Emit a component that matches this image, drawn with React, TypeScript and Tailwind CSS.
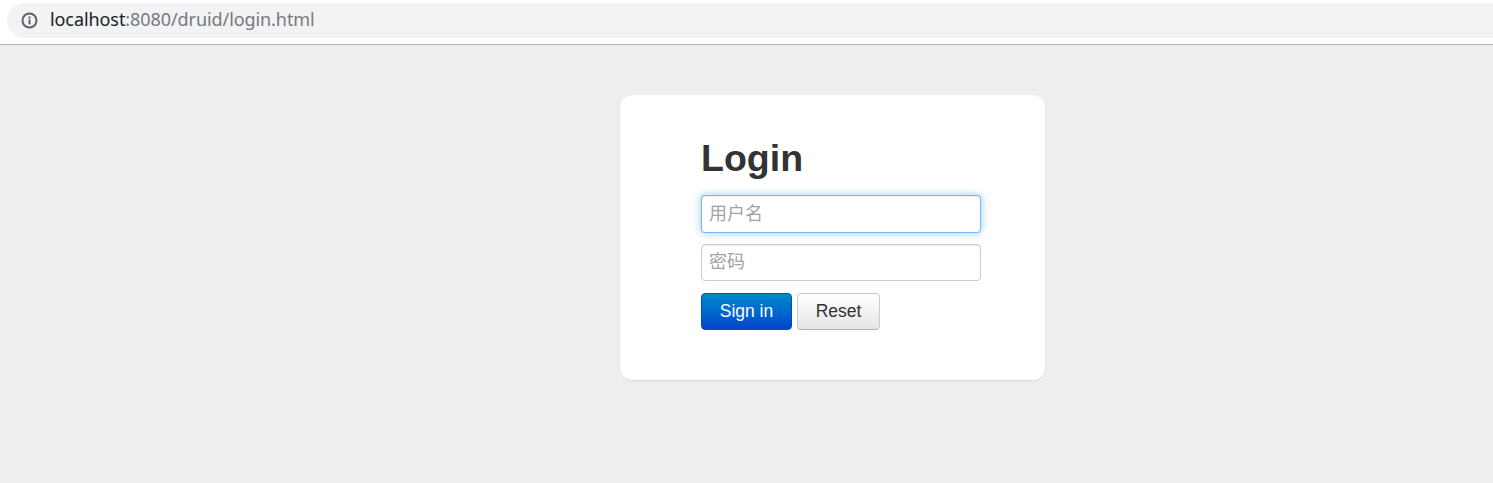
export default function App() {
  return (
    <div className="h-[483px] w-full overflow-hidden flex flex-col bg-[#eeeeee] font-['Liberation_Sans','Noto_Sans_CJK_SC',sans-serif]">
      <header className="h-[45px] shrink-0 bg-white border-b border-[#b3b3b3] pt-[3px] pl-[7px]">
        <div className="h-[35px] bg-[#f1f3f4] rounded-l-[18px] flex items-center pl-[14px]">
          <svg className="w-[17px] h-[17px] shrink-0 text-[#5f6368]" viewBox="0 0 17 17" fill="none">
            <circle cx="8.5" cy="8.5" r="7" stroke="currentColor" strokeWidth="2" />
            <rect x="7.5" y="7.4" width="2" height="5" fill="currentColor" />
            <rect x="7.5" y="4.5" width="2" height="2" fill="currentColor" />
          </svg>
          <p className="ml-[12px] -mt-[2px] text-[18px] tracking-[-0.08px] font-['Noto_Sans',sans-serif] text-[#77797d]">
            <span className="text-[#202124]">localhost</span>:8080/druid/login.html
          </p>
        </div>
      </header>
      <main className="pt-[50px] pl-[620px]">
        <form className="w-[425px] h-[285px] bg-white rounded-[12px] shadow-[0_1px_2px_rgba(0,0,0,0.08)] pl-[81px] pt-[40px]">
          <h1 className="text-[37.5px] leading-[46px] font-bold text-[#333333]">Login</h1>
          <div className="mt-[14px] flex flex-col w-[280px]">
            <input
              placeholder="用户名"
              className="h-[38px] px-[7px] text-[18px] bg-white rounded-[4px] border border-[rgba(82,168,236,0.8)] outline-none shadow-[inset_0_1px_1px_rgba(0,0,0,0.075),0_0_8px_rgba(82,168,236,0.6)] placeholder:text-[#a3a3a3]"
            />
            <input
              placeholder="密码"
              className="mt-[11px] h-[37px] px-[7px] text-[18px] bg-white rounded-[4px] border border-[#cccccc] outline-none shadow-[inset_0_1px_1px_rgba(0,0,0,0.075)] placeholder:text-[#a3a3a3]"
            />
          </div>
          <div className="mt-[12px] flex gap-[5px]">
            <button
              type="button"
              className="w-[91px] h-[37px] rounded-[4px] border border-[#0052a8] bg-gradient-to-b from-[#0088cc] to-[#0044cc] text-[17.5px] text-white"
            >
              Sign in
            </button>
            <button
              type="button"
              className="w-[83px] h-[37px] rounded-[4px] border border-[#cccccc] border-b-[#b3b3b3] bg-gradient-to-b from-white to-[#e6e6e6] text-[17.5px] text-[#333333]"
            >
              Reset
            </button>
          </div>
        </form>
      </main>
    </div>
  );
}
